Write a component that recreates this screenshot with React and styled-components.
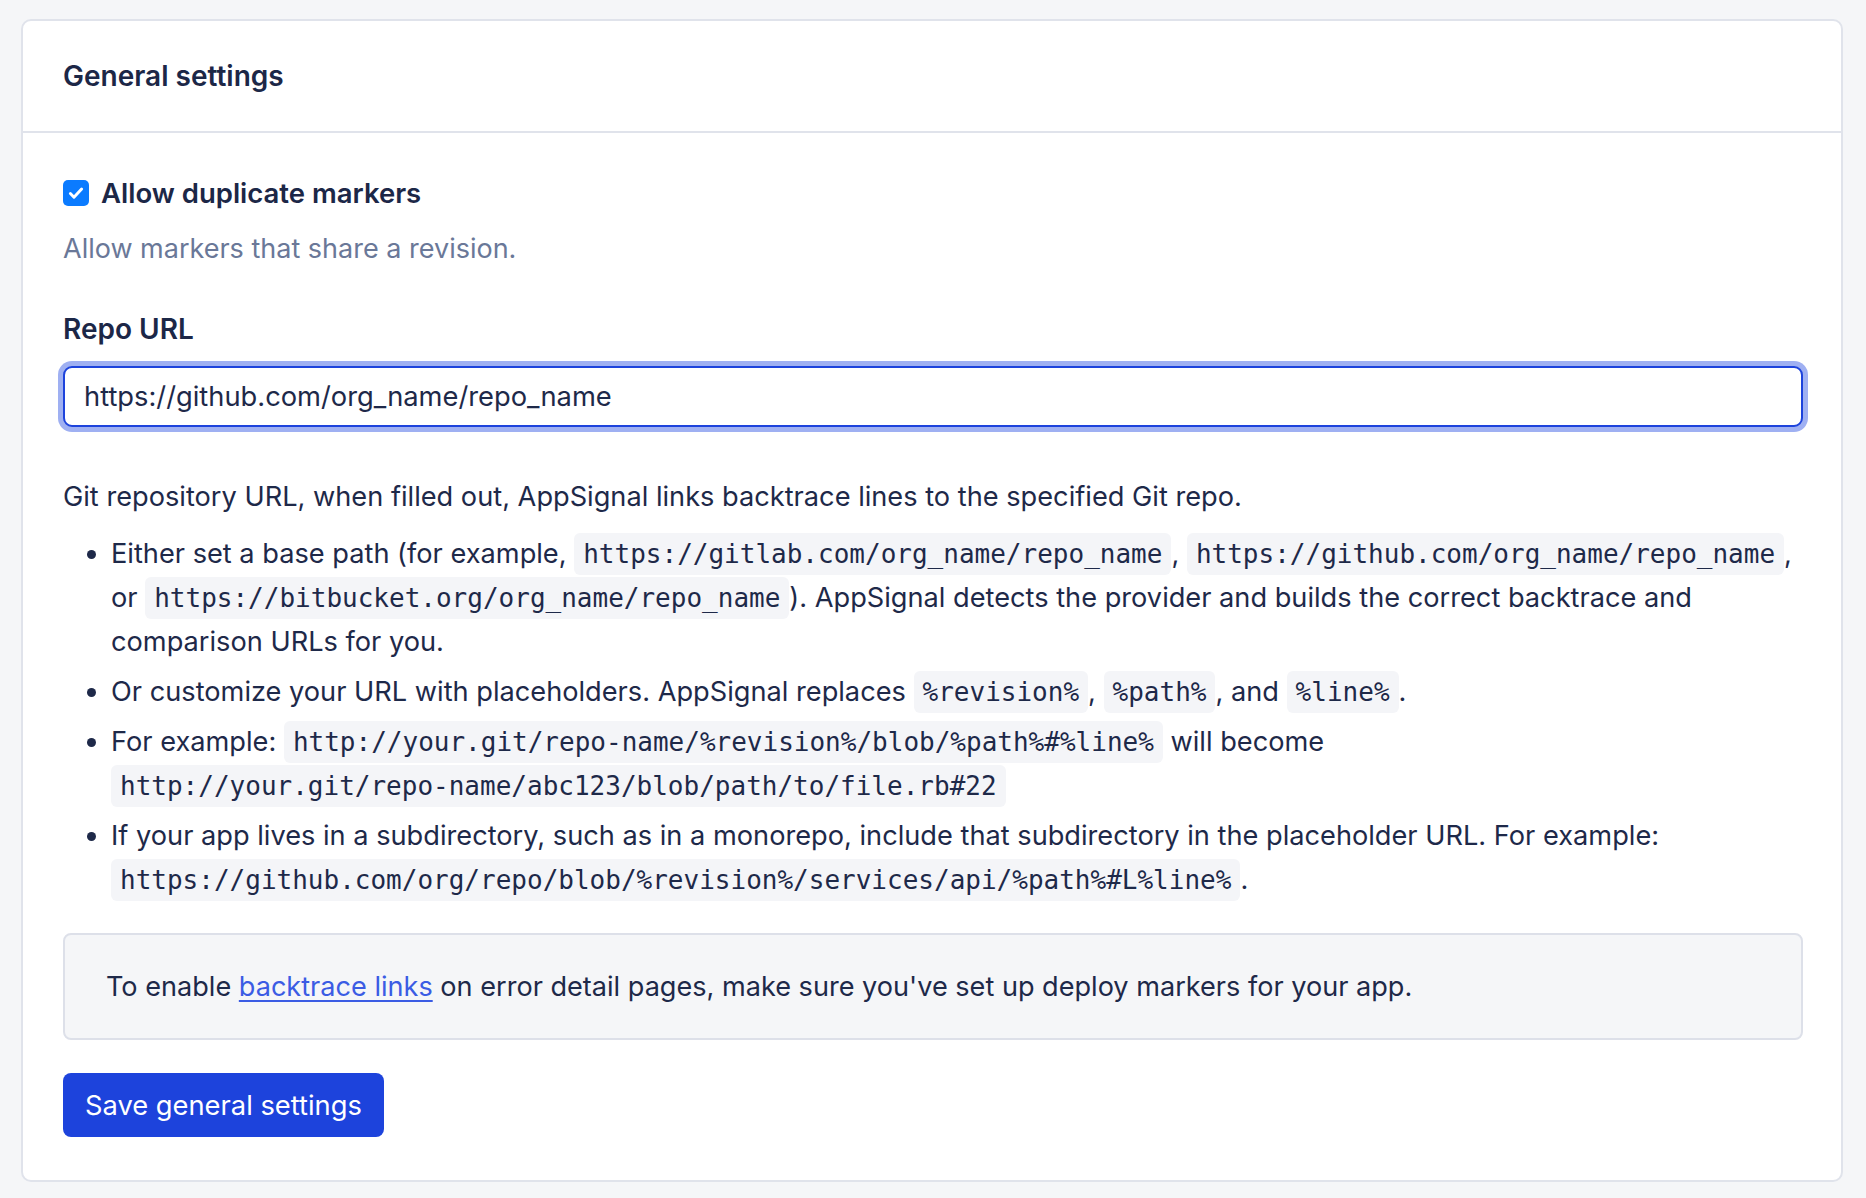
import React from 'react';
import styled, { createGlobalStyle } from 'styled-components';

const GlobalStyle = createGlobalStyle`
  body {
    margin: 0;
    background: #f5f6f8;
    font-family: Inter, 'Noto Sans', sans-serif;
    color: #1e2949;
  }
`;

const Page = styled.div`
  padding: 19px 23px 20px 21px;
`;

const Card = styled.section`
  background: #ffffff;
  border: 2px solid #e0e3eb;
  border-radius: 10px;
`;

const CardHeader = styled.header`
  display: flex;
  align-items: center;
  height: 110px;
  padding: 0 40px;
  border-bottom: 2px solid #e0e3eb;
`;

const Title = styled.h2`
  margin: 0;
  font-size: 28px;
  font-weight: 600;
  color: #1c2747;
`;

const CardBody = styled.form`
  padding: 42px 38px 43px 40px;
`;

const CheckRow = styled.label`
  display: flex;
  align-items: center;
  gap: 12px;
  font-size: 27.5px;
  font-weight: 600;
  line-height: 36px;
  color: #1c2747;
`;

const CheckBox = styled.span`
  display: inline-flex;
  align-items: center;
  justify-content: center;
  width: 26px;
  height: 26px;
  border-radius: 5px;
  background: #0b7bff;
`;

const Hint = styled.p`
  margin: 20px 0 0;
  font-size: 27px;
  line-height: 36px;
  color: #6a7898;
`;

const FieldLabel = styled.div`
  margin-top: 44px;
  font-size: 28px;
  font-weight: 600;
  line-height: 36px;
  color: #1c2747;
`;

const Input = styled.input`
  display: block;
  box-sizing: border-box;
  width: 100%;
  height: 61px;
  margin-top: 19px;
  padding: 0 19px;
  border: 2px solid #1d43dc;
  border-radius: 9px;
  box-shadow: 0 0 0 5px #9fb0f2;
  font-family: inherit;
  font-size: 27.3px;
  color: #1e2949;
  outline: none;
`;

const Help = styled.div`
  margin-top: 48px;
  font-size: 27.2px;
  line-height: 44px;
`;

const Para = styled.p`
  margin: 0;
`;

const List = styled.ul`
  margin: 13px 0 0;
  padding-left: 48px;
`;

const Item = styled.li`
  margin-top: ${(props) => (props.$first ? '0' : '6px')};
`;

const Code = styled.code`
  font-family: 'DejaVu Sans Mono', 'Liberation Mono', monospace;
  font-size: 26px;
  white-space: nowrap;
  padding: 6px 9px;
  border-radius: 6px;
  background: #f4f5f8;
  color: #1e2949;
`;

const Note = styled.div`
  display: flex;
  align-items: center;
  height: 107px;
  box-sizing: border-box;
  margin-top: 31px;
  padding: 0 41px;
  background: #f5f6f8;
  border: 2px solid #dde0e9;
  border-radius: 8px;
  font-size: 27.1px;
`;

const Link = styled.a`
  color: #3b5ce4;
  text-decoration: underline;
  text-underline-offset: 4px;
`;

const SaveButton = styled.button`
  margin-top: 33px;
  height: 64px;
  padding: 0 22px;
  border: none;
  border-radius: 8px;
  background: #1d43dc;
  color: #ffffff;
  font-family: inherit;
  font-size: 27.3px;
  cursor: pointer;
`;

function CheckIcon() {
  return (
    <svg width='18' height='18' viewBox='0 0 16 16' fill='none'>
      <path
        d='M3 8.5l3.2 3.2L13 4.5'
        stroke='#ffffff'
        strokeWidth='2.6'
        strokeLinecap='round'
        strokeLinejoin='round'
      />
    </svg>
  );
}

export default function App() {
  return (
    <Page>
      <GlobalStyle />
      <Card>
        <CardHeader>
          <Title>General settings</Title>
        </CardHeader>
        <CardBody onSubmit={(e) => e.preventDefault()}>
          <CheckRow>
            <CheckBox>
              <CheckIcon />
            </CheckBox>
            Allow duplicate markers
          </CheckRow>
          <Hint>Allow markers that share a revision.</Hint>

          <FieldLabel>Repo URL</FieldLabel>
          <Input defaultValue='https://github.com/org_name/repo_name' />

          <Help>
            <Para>
              Git repository URL, when filled out, AppSignal links backtrace
              lines to the specified Git repo.
            </Para>
            <List>
              <Item $first>
                Either set a base path (for example,{' '}
                <Code>https://gitlab.com/org_name/repo_name</Code>,{' '}
                <Code>https://github.com/org_name/repo_name</Code>, or{' '}
                <Code>https://bitbucket.org/org_name/repo_name</Code>).
                AppSignal detects the provider and builds the correct
                backtrace and comparison URLs for you.
              </Item>
              <Item>
                Or customize your URL with placeholders. AppSignal replaces{' '}
                <Code>%revision%</Code>, <Code>%path%</Code>, and{' '}
                <Code>%line%</Code>.
              </Item>
              <Item>
                For example:{' '}
                <Code>http://your.git/repo-name/%revision%/blob/%path%#%line%</Code>{' '}
                will become{' '}
                <Code>http://your.git/repo-name/abc123/blob/path/to/file.rb#22</Code>
              </Item>
              <Item>
                If your app lives in a subdirectory, such as in a monorepo,
                include that subdirectory in the placeholder URL. For example:{' '}
                <Code>
                  https://github.com/org/repo/blob/%revision%/services/api/%path%#L%line%
                </Code>
                .
              </Item>
            </List>
          </Help>

          <Note>
            <span>
              To enable <Link href='#'>backtrace links</Link> on error detail
              pages, make sure you've set up deploy markers for your app.
            </span>
          </Note>

          <SaveButton type='submit'>Save general settings</SaveButton>
        </CardBody>
      </Card>
    </Page>
  );
}
